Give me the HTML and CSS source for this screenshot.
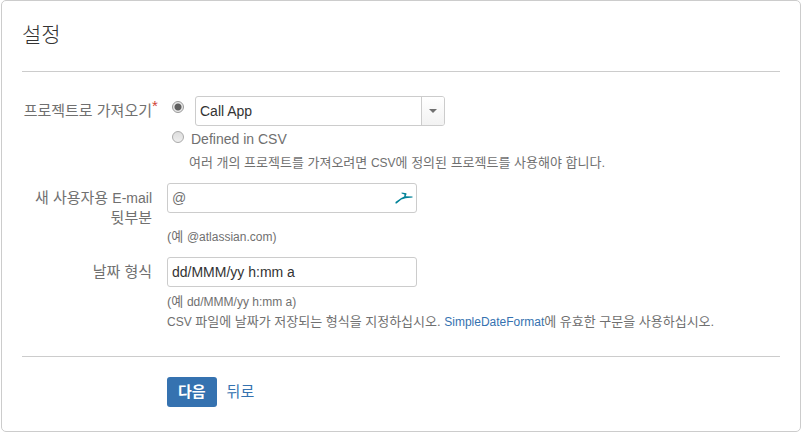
FILE: index.html
```html
<!DOCTYPE html>
<html lang="ko">
<head>
<meta charset="utf-8">
<meta name="viewport" content="width=device-width, initial-scale=1">
<title>설정</title>
<link rel="stylesheet" href="styles.css">
</head>
<body>
<main class="panel">
  <h1 class="title">설정</h1>
  <form class="form">
    <div class="row project-row">
      <label class="label" for="project">프로젝트로 가져오기<span class="required">*</span></label>
      <div class="field">
        <div class="choice">
          <input class="radio" type="radio" name="source" value="project" aria-label="프로젝트 선택" checked>
          <span class="select-wrap">
            <select class="control select" id="project"><option>Call App</option></select>
            <span class="arrow"></span>
          </span>
        </div>
        <div class="choice csv-choice">
          <input class="radio" type="radio" name="source" value="csv" id="csv">
          <label class="choice-label" for="csv">Defined in CSV</label>
        </div>
        <p class="hint indented">여러 개의 프로젝트를 가져오려면 <span class="latin">CSV</span>에 정의된 프로젝트를 사용해야 합니다.</p>
      </div>
    </div>
    <div class="row suffix-row">
      <label class="label" for="suffix">새 사용자용 <span class="label-latin">E-mail</span> 뒷부분</label>
      <div class="field">
        <div class="text-wrap">
          <input class="control text muted" type="text" id="suffix" value="@">
          <svg class="bird" viewBox="0 0 18 12" aria-hidden="true">
            <path d="M.5 11.6V10L6.2 6 9.2 4.4 9.5 2.6 6.6 1.4V.4L11.4 1.3V2.4L10.6 4.2 17.5 4.6V5.5L10.5 6.3 6.4 7.6 1.6 11.6Z"/>
          </svg>
        </div>
        <p class="hint">(예 <span class="latin">@atlassian.com)</span></p>
      </div>
    </div>
    <div class="row">
      <label class="label" for="format">날짜 형식</label>
      <div class="field">
        <input class="control text" type="text" id="format" value="dd/MMM/yy h:mm a">
        <p class="hint">(예 <span class="latin">dd/MMM/yy h:mm a)</span><br><span class="latin">CSV</span> 파일에 날짜가 저장되는 형식을 지정하십시오. <a class="link latin" href="#">SimpleDateFormat</a>에 유효한 구문을 사용하십시오.</p>
      </div>
    </div>
    <div class="actions">
      <button class="next" type="submit">다음</button>
      <a class="link back" href="#">뒤로</a>
    </div>
  </form>
</main>
</body>
</html>
```
FILE: styles.css
```css
* { box-sizing: border-box; }
body {
  margin: 0;
  background: #fff;
  color: #707070;
  font: 14px/20px "Liberation Sans", "Noto Sans CJK KR", sans-serif;
}
.panel {
  margin-left: 1px;
  padding: 0 20px 24px;
  border: 1px solid #ccc;
  border-radius: 5px;
}
.title {
  margin: 0;
  padding: 19px 0 21px;
  border-bottom: 1px solid #ccc;
  color: #333;
  font-size: 21px;
  line-height: 30px;
  font-weight: 300;
}
.form { padding-top: 24px; }
.row {
  display: grid;
  grid-template-columns: 130px minmax(0, 1fr);
  column-gap: 15px;
  margin-bottom: 10px;
}
.label {
  position: relative;
  padding-top: 5px;
  font-size: 15px;
  text-align: right;
}
.label-latin { font-size: 14px; }
.required {
  position: absolute;
  top: 0;
  left: 100%;
  color: #d04437;
}
.choice {
  display: flex;
  align-items: flex-start;
  padding-left: 5px;
}
.csv-choice { padding-top: 3px; }
.radio {
  appearance: none;
  flex: none;
  width: 12px;
  height: 12px;
  margin: 5px 11px 0 0;
  border: 1px solid #aaa;
  border-radius: 50%;
  background: linear-gradient(#ddd, #eee);
}
.radio:checked {
  border-color: #999;
  background: radial-gradient(circle, #606060 0 3px, #e8e8e8 4px);
}
.csv-choice .radio { margin: 2px 7px 0 0; }
.select-wrap,
.text-wrap {
  position: relative;
  width: 250px;
}
.control {
  display: block;
  width: 250px;
  max-width: 100%;
  height: 30px;
  margin: 0;
  padding: 0 4px;
  border: 1px solid #ccc;
  border-radius: 3px;
  background: #fff;
  color: #333;
  font: inherit;
}
.select { appearance: none; }
.muted { color: #707070; }
.arrow {
  position: absolute;
  inset: 1px 1px 1px auto;
  display: grid;
  place-items: center;
  width: 23px;
  border-left: 1px solid #ccc;
  border-radius: 0 2px 2px 0;
  background: linear-gradient(#fff, #f2f2f2);
  pointer-events: none;
}
.arrow::before {
  content: "";
  border: 4px solid transparent;
  border-top-color: #707070;
  border-bottom: 0;
}
.hint {
  margin: 5px 0 0;
  font-size: 13px;
  line-height: 20px;
}
.suffix-row .hint { margin-top: 14px; }
.project-row .hint { margin-top: 4px; }
.indented { padding-left: 22px; }
.latin { font-size: 12px; }
.bird {
  position: absolute;
  top: 9px;
  right: 4px;
  width: 18px;
  height: 12px;
  fill: #008298;
}
.link {
  color: #3572b0;
  text-decoration: none;
}
.actions {
  display: flex;
  align-items: center;
  gap: 10px;
  margin-top: 24px;
  padding: 20px 0 0 145px;
  border-top: 1px solid #ccc;
}
.next {
  height: 30px;
  padding: 0 11px;
  border: 0;
  border-radius: 3px;
  background: #3572b0;
  color: #fff;
  font: bold 15px/20px "Liberation Sans", "Noto Sans CJK KR", sans-serif;
}
.back { font-size: 15px; }
```
